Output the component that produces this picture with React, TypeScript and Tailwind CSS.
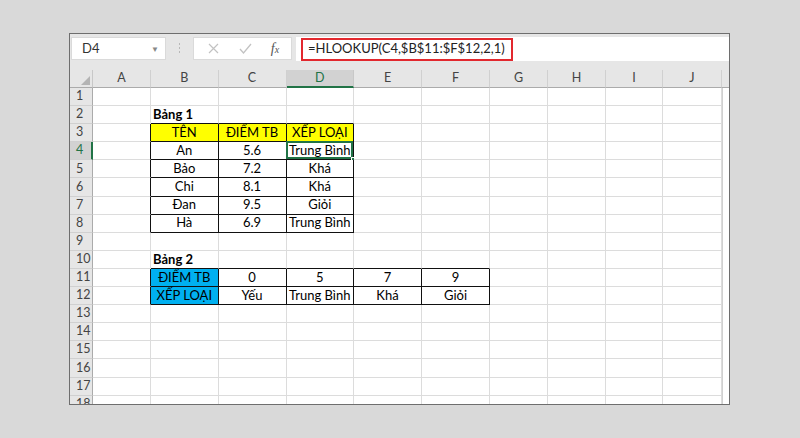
import React from 'react';

const COLS = ['A', 'B', 'C', 'D', 'E', 'F', 'G', 'H', 'I', 'J'];
const ROWS = Array.from({ length: 18 }, (_, i) => i + 1);

interface CellDef {
  text: string;
  bg?: 'yellow' | 'blue';
  bold?: boolean;
  left?: boolean;
}

const cells: Record<string, CellDef> = {
  B2: { text: 'Bảng 1', bold: true, left: true },
  B3: { text: 'TÊN', bg: 'yellow' },
  C3: { text: 'ĐIỂM TB', bg: 'yellow' },
  D3: { text: 'XẾP LOẠI', bg: 'yellow' },
  B4: { text: 'An' }, C4: { text: '5.6' }, D4: { text: 'Trung Bình' },
  B5: { text: 'Bảo' }, C5: { text: '7.2' }, D5: { text: 'Khá' },
  B6: { text: 'Chi' }, C6: { text: '8.1' }, D6: { text: 'Khá' },
  B7: { text: 'Đan' }, C7: { text: '9.5' }, D7: { text: 'Giỏi' },
  B8: { text: 'Hà' }, C8: { text: '6.9' }, D8: { text: 'Trung Bình' },
  B10: { text: 'Bảng 2', bold: true, left: true },
  B11: { text: 'ĐIỂM TB', bg: 'blue' },
  C11: { text: '0' }, D11: { text: '5' }, E11: { text: '7' }, F11: { text: '9' },
  B12: { text: 'XẾP LOẠI', bg: 'blue' },
  C12: { text: 'Yếu' }, D12: { text: 'Trung Bình' }, E12: { text: 'Khá' }, F12: { text: 'Giỏi' },
};

// table ranges with black borders: B3:D8 and B11:F12
const inTable = (c: number, r: number) =>
  (c >= 1 && c <= 3 && r >= 3 && r <= 8) || (c >= 1 && c <= 5 && r >= 11 && r <= 12);

const Cell: React.FC<{ c: number; r: number }> = ({ c, r }) => {
  const key = `${COLS[c]}${r}`;
  const def = cells[key];
  const right = inTable(c, r) || inTable(c + 1, r);
  const bottom = inTable(c, r) || inTable(c, r + 1);
  const active = key === 'D4';
  return (
    <div
      className={[
        'relative h-[18.1px] border-r border-b flex items-center overflow-visible whitespace-nowrap text-[13px] text-black',
        right ? 'border-r-[#111111]' : 'border-r-[#dcdcdc]',
        bottom ? 'border-b-[#111111]' : 'border-b-[#dcdcdc]',
        def?.bg === 'yellow' ? 'bg-[#ffff00]' : def?.bg === 'blue' ? 'bg-[#00b0f0]' : 'bg-white',
        def?.left ? 'justify-start pl-[2px]' : 'justify-center',
        def?.bold ? 'font-bold' : '',
      ].join(' ')}
    >
      {def?.text}
      {active && (
        <>
          <div className="absolute -left-[1px] -top-[1px] -right-[0px] -bottom-[0px] border-2 border-[#217346] pointer-events-none" />
          <div className="absolute -right-[3px] -bottom-[3px] w-[5px] h-[5px] bg-[#217346] border border-white" />
        </>
      )}
    </div>
  );
};

export default function App() {
  return (
    <div className="w-[800px] h-[438px] bg-[#d9d9d9] pt-[33px] pl-[69px] font-['Lato','Noto_Sans',sans-serif] overflow-hidden">
      <div className="w-[661px] h-[372px] border border-[#6e6e6e] bg-[#e6e6e6] overflow-hidden flex flex-col">
        {/* formula bar */}
        <div className="h-[36px] flex items-start pt-[3px] pl-[1px] shrink-0">
          <div className="w-[95px] h-[23px] bg-white border border-[#dadada] flex items-center justify-between pl-[10px] pr-[6px] text-[13px] text-[#333]">
            <span>D4</span>
            <span className="text-[8px] text-[#888]">▼</span>
          </div>
          <div className="w-[27px] h-[23px] flex items-center justify-center">
            <svg width="3" height="11" viewBox="0 0 3 11">
              <rect x="1" y="0" width="1" height="2" fill="#b8b8b8" />
              <rect x="1" y="4" width="1" height="2" fill="#b8b8b8" />
              <rect x="1" y="8" width="1" height="2" fill="#b8b8b8" />
            </svg>
          </div>
          <div className="w-[99px] h-[23px] bg-white border border-[#dadada] flex items-center">
            <div className="w-[33px] flex justify-center ml-[3px]">
              <svg width="11" height="11" viewBox="0 0 11 11" fill="none" stroke="#c2c2c2" strokeWidth="1.2">
                <path d="M1 1L10 10M10 1L1 10" />
              </svg>
            </div>
            <div className="w-[30px] flex justify-center">
              <svg width="13" height="11" viewBox="0 0 13 11" fill="none" stroke="#c2c2c2" strokeWidth="1.3">
                <path d="M1 6L4.5 10L12 1" />
              </svg>
            </div>
            <div className="w-[30px] flex justify-center">
              <span className="font-['Liberation_Serif',serif] italic text-[14px] text-[#555] leading-none">
                f<span className="text-[10px]">x</span>
              </span>
            </div>
          </div>
          <div className="ml-[4px] flex-1 h-[24px] bg-white flex items-center pl-[5px]">
            <div className="h-[23px] border-2 border-[#e2282e] flex items-center pl-[5px] pr-[6px] text-[13px] text-[#222]">
              =HLOOKUP(C4,$B$11:$F$12,2,1)
            </div>
          </div>
        </div>

        {/* sheet */}
        <div className="grid grid-cols-[23px_58px_67.5px_68px_67.5px_68px_68px_58px_58px_57px_59px_7px]">
          {/* header row */}
          <div className="h-[18px] bg-[#e6e6e6] border-r border-b border-r-[#c8c8c8] border-b-[#ababab] relative">
            <svg className="absolute right-[2px] bottom-[2px]" width="9" height="9" viewBox="0 0 9 9">
              <path d="M9 0L9 9L0 9Z" fill="#b4b4b4" />
            </svg>
          </div>
          {COLS.map((col) =>
            col === 'D' ? (
              <div
                key={col}
                className="h-[18px] bg-[#d2d2d2] border-r border-r-[#c8c8c8] border-b-2 border-b-[#217346] flex items-center justify-center text-[12.5px] text-[#217346]"
              >
                {col}
              </div>
            ) : (
              <div
                key={col}
                className="h-[18px] bg-[#e6e6e6] border-r border-b border-r-[#d0d0d0] border-b-[#ababab] flex items-center justify-center text-[12.5px] text-[#444]"
              >
                {col}
              </div>
            )
          )}
          <div className="h-[18px] bg-[#e6e6e6] border-b border-b-[#ababab]" />

          {ROWS.map((r) => (
            <React.Fragment key={r}>
              <div
                className={[
                  'h-[18.1px] border-b border-b-[#d0d0d0] flex items-center pl-[6px] text-[12.5px]',
                  r === 4
                    ? 'bg-[#d2d2d2] border-r-2 border-r-[#217346] text-[#217346]'
                    : 'bg-[#e6e6e6] border-r border-r-[#ababab] text-[#444]',
                ].join(' ')}
              >
                {r}
              </div>
              {COLS.map((_, c) => (
                <Cell key={c} c={c} r={r} />
              ))}
              <div className="h-[18.1px] bg-white border-l border-l-[#d0d0d0]" />
            </React.Fragment>
          ))}
        </div>
      </div>
    </div>
  );
}
